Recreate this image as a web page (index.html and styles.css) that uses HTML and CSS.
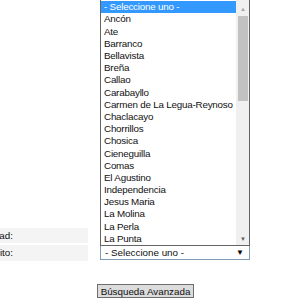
FILE: index.html
```html
<!DOCTYPE html>
<html lang="es">
<head>
  <meta charset="UTF-8" />
  <title>Búsqueda</title>
  <link rel="stylesheet" href="styles.css">
</head>
<body>
  <div class="form">
    <div class="row">
      <div class="label">Localidad:</div>
      <div class="field">
        <div class="select"></div>
      </div>
    </div>
    <div class="row">
      <div class="label">Distrito:</div>
      <div class="field">
        <div class="select">- Seleccione uno -<span class="arrow">▼</span></div>
        <div class="popup">
          <ul class="options">
            <li class="selected">- Seleccione uno -</li>
            <li>Ancón</li>
            <li>Ate</li>
            <li>Barranco</li>
            <li>Bellavista</li>
            <li>Breña</li>
            <li>Callao</li>
            <li>Carabayllo</li>
            <li>Carmen de La Legua-Reynoso</li>
            <li>Chaclacayo</li>
            <li>Chorrillos</li>
            <li>Chosica</li>
            <li>Cieneguilla</li>
            <li>Comas</li>
            <li>El Agustino</li>
            <li>Independencia</li>
            <li>Jesus Maria</li>
            <li>La Molina</li>
            <li>La Perla</li>
            <li>La Punta</li>
          </ul>
          <div class="scrollbar">
            <div class="sb-up">▲</div>
            <div class="sb-track"><div class="sb-thumb"></div></div>
            <div class="sb-down">▼</div>
          </div>
        </div>
      </div>
    </div>
    <div class="actions">
      <button class="btn">Búsqueda Avanzada</button>
    </div>
  </div>
</body>
</html>
```

FILE: styles.css
```css
body {
  margin: 0;
  background: #fff;
  font-family: "Liberation Sans", Arial, sans-serif;
  font-size: 9.8px;
  color: #111;
  overflow: hidden;
}

.form {
  padding-top: 228px;
}

.row {
  display: grid;
  grid-template-columns: 88px 150px;
  column-gap: 12px;
  margin-bottom: 2px;
}

.row + .row {
  margin-top: 1px;
}

.label {
  background: #f4f4f4;
  height: 15px;
  line-height: 15px;
  text-align: right;
  padding-right: 75px;
  margin-left: -40px;
  white-space: nowrap;
  overflow: hidden;
}

.row + .row .label {
  height: 16px;
  line-height: 16px;
}

.field {
  position: relative;
}

.select {
  box-sizing: border-box;
  height: 15px;
  line-height: 13px;
  border: 1px solid #7f9db9;
  padding-left: 4px;
  background: #fff;
  position: relative;
}

.arrow {
  position: absolute;
  right: 5px;
  top: 0;
  font-size: 8px;
  color: #000;
}

/* open dropdown of the district select */
.popup {
  position: absolute;
  left: 0;
  bottom: 100%;
  margin-bottom: -1px;
  box-sizing: border-box;
  width: 150px;
  height: 252px;
  border: 1px solid #646464;
  background: #fff;
  display: flex;
}

.options {
  list-style: none;
  margin: 0;
  padding: 0;
  flex: 1;
  display: flex;
  flex-direction: column;
  justify-content: flex-end;
  overflow: hidden;
}

.options li {
  flex: none;
  height: 12.2px;
  line-height: 12px;
  padding-left: 3px;
  letter-spacing: -0.2px;
  white-space: nowrap;
}

.options li.selected {
  background: #3399ff;
  color: #fff;
}

.scrollbar {
  width: 12px;
  display: flex;
  flex-direction: column;
  background: #f0f0f0;
  border-left: 1px solid #f0f0f0;
}

.sb-up,
.sb-down {
  height: 12px;
  line-height: 12px;
  font-size: 6px;
  text-align: center;
  color: #a6a6a6;
}

.sb-up {
  padding-top: 8px;
}

.sb-down {
  color: #606060;
}

.sb-track {
  flex: 1;
  padding: 0 1px;
}

.sb-thumb {
  height: 85px;
  margin-top: 1px;
  background: #c2c2c2;
}

.actions {
  padding-top: 21px;
  padding-left: 97px;
}

.btn {
  font-family: "Liberation Sans", Arial, sans-serif;
  font-size: 9.8px;
  color: #111;
  width: 97px;
  height: 14px;
  padding: 0;
  line-height: 11px;
  background: #dcdcdc;
  border: 1px solid #6e6e6e;
  border-radius: 0;
}
```
